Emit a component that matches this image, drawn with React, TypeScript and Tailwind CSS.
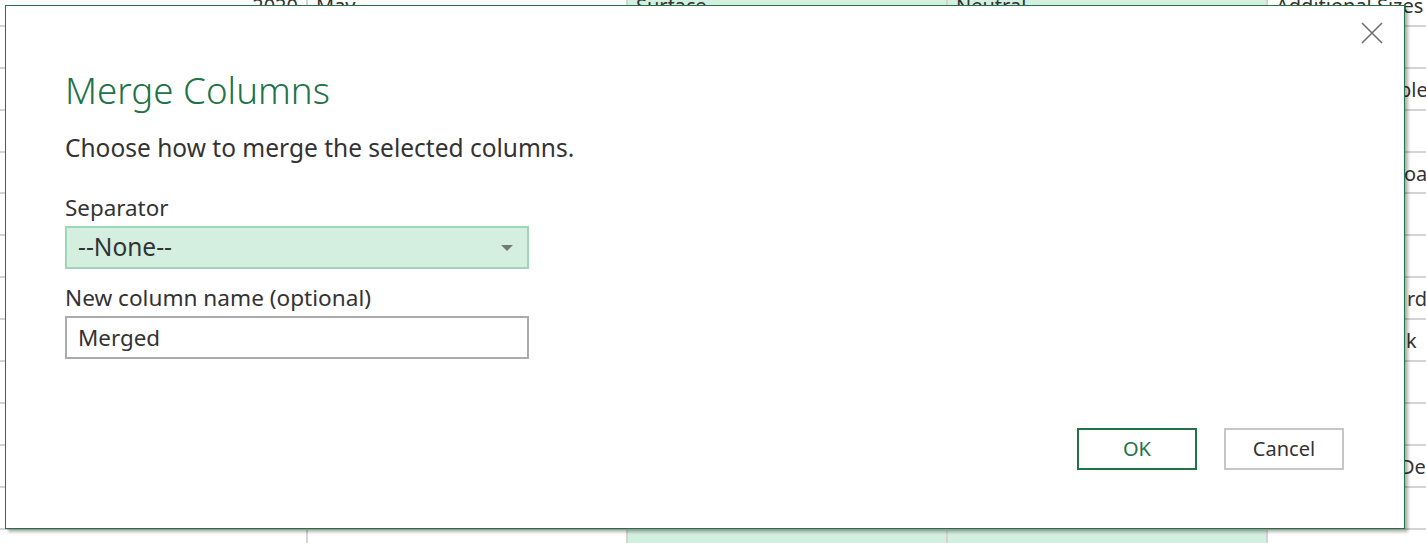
import React from "react";

const rows = Array.from({ length: 14 });

const lastCol: Record<number, string> = {
  2: "ble",
  4: "oa",
  7: "rde",
  8: "k",
  11: "Det",
};

const lastPad: Record<number, string> = {
  2: "pl-[123px]",
  4: "pl-[128px]",
  7: "pl-[131px]",
  8: "pl-[130px]",
  11: "pl-[124px]",
};

export default function App() {
  return (
    <div
      className="relative w-[1426px] h-[543px] overflow-hidden bg-white text-[#333333]"
      style={{ fontFamily: '"Noto Sans", "Open Sans", sans-serif' }}
    >
      {/* spreadsheet background */}
      <div className="flex flex-col mt-[-15px]">
        {rows.map((_, i) => (
          <div key={i} className="flex h-[41.9px] text-[20px] leading-[41px]">
            <div className="w-[308px] border-b-2 border-r-2 border-[#d4d4d4] pr-[8px] text-right">
              {i === 0 ? "2020" : ""}
            </div>
            <div className="w-[320px] border-b-2 border-r-2 border-[#d4d4d4] pl-[8px]">
              {i === 0 ? "May" : ""}
            </div>
            <div className="w-[320px] border-b-2 border-r-2 border-[#d4d4d4] bg-[#d3efe0] pl-[8px]">
              {i === 0 ? "Surface" : ""}
            </div>
            <div className="w-[320px] border-b-2 border-r-2 border-[#d4d4d4] bg-[#d3efe0] pl-[8px]">
              {i === 0 ? "Neutral" : ""}
            </div>
            <div className="flex-1 border-b-2 border-[#d4d4d4] pl-[8px] whitespace-nowrap overflow-hidden">
              {i === 0 ? (
                "Additional Sizes"
              ) : (
                <span className={lastPad[i] ?? ""}>{lastCol[i] ?? ""}</span>
              )}
            </div>
          </div>
        ))}
      </div>

      {/* dialog */}
      <div className="absolute left-[5px] top-[5px] w-[1400px] h-[524px] bg-white border border-[#217346] shadow-[3px_3px_3px_rgba(0,0,0,0.3)] flex flex-col pl-[59px] pr-[60px]">
        <button className="absolute right-[20px] top-[15px] w-[24px] h-[24px] flex items-center justify-center">
          <svg width="22" height="22" viewBox="0 0 22 22">
            <path d="M1 1 L21 21 M21 1 L1 21" stroke="#6e6e6e" strokeWidth="1.6" fill="none" />
          </svg>
        </button>

        <div className="mt-[59px] text-[36.7px] leading-[50px] font-light text-[#217346]">Merge Columns</div>

        <div className="mt-[16px] text-[24.5px] leading-[34px]">Choose how to merge the selected columns.</div>

        <div className="mt-[28px] text-[22.4px] leading-[30px]">Separator</div>
        <div className="mt-[3px] w-[464px] h-[43px] bg-[#d4efdf] border-2 border-[#9fd6b8] flex items-center justify-between pl-[11px] pr-[14px] text-[24.5px]">
          <span>--None--</span>
          <svg width="12" height="6" viewBox="0 0 12 6">
            <path d="M0 0 L12 0 L6 6 Z" fill="#777777" />
          </svg>
        </div>

        <div className="mt-[14px] text-[22.6px] leading-[30px]">New column name (optional)</div>
        <div className="mt-[3px] w-[464px] h-[43px] border-2 border-[#ababab] flex items-center pl-[11px] text-[22.4px]">
          Merged
        </div>

        <div className="flex-1" />
        <div className="flex justify-end gap-[27px] mb-[58px]">
          <button className="w-[120px] h-[42px] border-2 border-[#217346] text-[#217346] text-[20px]">OK</button>
          <button className="w-[120px] h-[42px] border-2 border-[#c6c6c6] text-[#333333] text-[20px]">Cancel</button>
        </div>
      </div>
    </div>
  );
}
